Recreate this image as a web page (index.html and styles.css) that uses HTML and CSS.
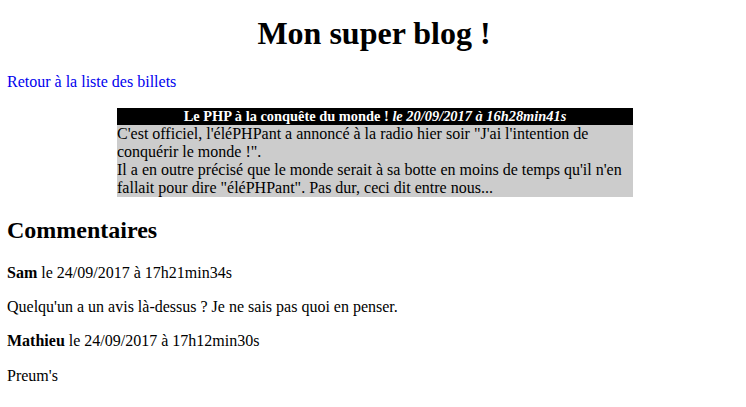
FILE: index.html
```html
<!DOCTYPE html>
<html lang="fr">
<head>
<meta charset="utf-8">
<title>Mon blog</title>
<link rel="stylesheet" href="styles.css">
</head>
<body>
<h1 class="site-title">Mon super blog !</h1>
<p><a href="#">Retour à la liste des billets</a></p>

<div class="news">
  <h3>Le PHP à la conquête du monde ! <em>le 20/09/2017 à 16h28min41s</em></h3>
  <p>C'est officiel, l'éléPHPant a annoncé à la radio hier soir "J'ai l'intention de conquérir le monde !".<br>
  Il a en outre précisé que le monde serait à sa botte en moins de temps qu'il n'en fallait pour dire "éléPHPant". Pas dur, ceci dit entre nous...</p>
</div>

<h2>Commentaires</h2>

<p><strong>Sam</strong> le 24/09/2017 à 17h21min34s</p>
<p>Quelqu'un a un avis là-dessus ? Je ne sais pas quoi en penser.</p>
<p><strong>Mathieu</strong> le 24/09/2017 à 17h12min30s</p>
<p>Preum's</p>
</body>
</html>
```

FILE: styles.css
```css
body {
  font-family: "Liberation Serif", "Times New Roman", serif;
  font-size: 16px;
  color: #000;
  background: #fff;
  margin: 8px 8px 8px 7px;
}

.site-title {
  text-align: center;
  margin-top: 7px;
  padding-left: 3px;
}

a {
  color: #0000ee;
  text-decoration: none;
}

.news {
  width: 516px;
  margin-left: 110px;
}

.news h3 {
  background-color: #000;
  color: #fff;
  font-size: 0.9em;
  text-align: center;
  margin: 0;
}

.news h3 em {
  color: #fff;
}

.news p {
  background-color: #cccccc;
  margin-top: 0;
}

p {
  margin: 16.4px 0;
}
```
